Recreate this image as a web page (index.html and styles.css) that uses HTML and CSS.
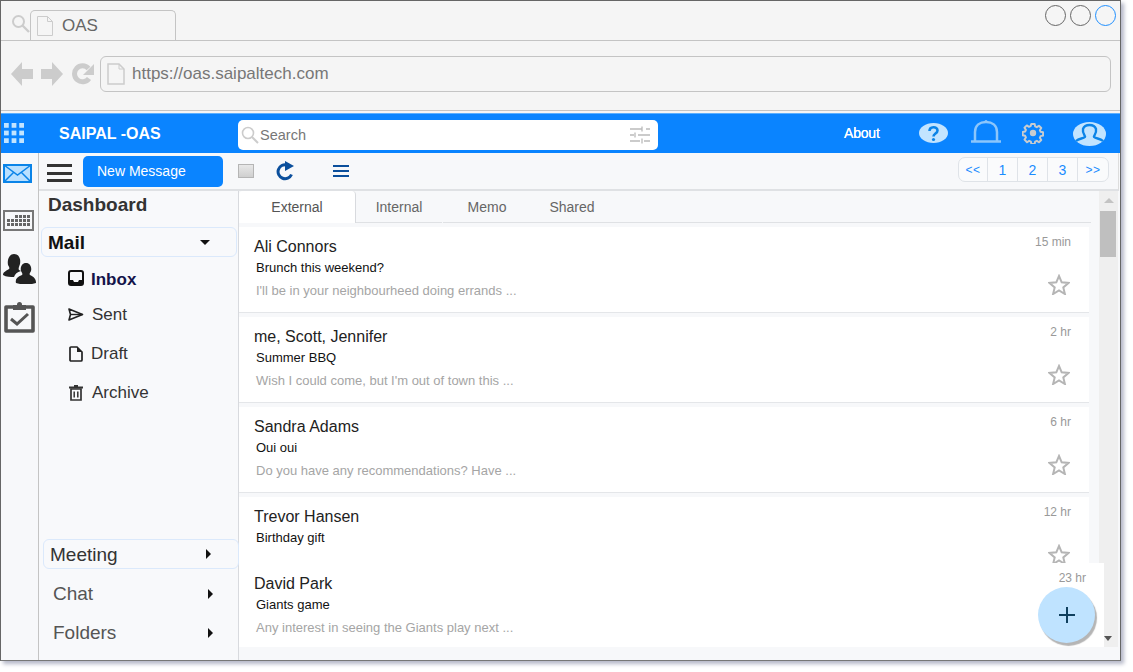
FILE: index.html
```html
<!DOCTYPE html>
<html lang="en">
<head>
<meta charset="utf-8">
<title>OAS</title>
<link rel="stylesheet" href="styles.css">
</head>
<body>
<div class="window">
  <div class="tabrow">
    <svg class="ic-search" width="20" height="20" viewBox="0 0 20 20"><circle cx="7.5" cy="7.5" r="5.5" fill="none" stroke="#ccc" stroke-width="2"/><path d="M11.5 11.5L18 18" stroke="#ccc" stroke-width="2.4"/></svg>
    <div class="tab">
      <svg width="16" height="20" viewBox="0 0 16 20"><path d="M.5.5h10l5 5v14H.5z" fill="#f5f5f5" stroke="#ccc"/><path d="M10.500.5v5h5" fill="none" stroke="#ccc"/></svg>
      <span>OAS</span>
    </div>
    <div class="winbtns"><i class="wb"></i><i class="wb"></i><i class="wb blue"></i></div>
  </div>
  <div class="addrrow">
    <svg class="nav-arrow" width="22" height="24" viewBox="0 0 22 24"><path d="M0 12L11 0v7h11v10H11v7z" fill="#ccc"/></svg>
    <svg class="nav-arrow" width="22" height="24" viewBox="0 0 22 24"><path d="M22 12L11 0v7H0v10h11v7z" fill="#ccc"/></svg>
    <svg class="nav-reload" width="22" height="22" viewBox="0 0 22 22"><path d="M17 15.500A8 8 0 1 1 16.500 5.500" fill="none" stroke="#ccc" stroke-width="5"/><path d="M22 1v11H11z" fill="#ccc"/></svg>
    <div class="addr">
      <svg width="18" height="22" viewBox="0 0 18 22"><path d="M1 1h11l5 5v15H1z" fill="#f5f5f5" stroke="#ccc" stroke-width="1.500"/><path d="M12 1v5h5" fill="none" stroke="#ccc"/></svg>
      <span>https://oas.saipaltech.com</span>
    </div>
  </div>
  <header class="appbar">
    <svg class="grid" width="20" height="20" viewBox="0 0 21 21" fill="#c2e4ff"><rect width="5" height="5"/><rect x="8" width="5" height="5"/><rect x="16" width="5" height="5"/><rect y="8" width="5" height="5"/><rect x="8" y="8" width="5" height="5"/><rect x="16" y="8" width="5" height="5"/><rect y="16" width="5" height="5"/><rect x="8" y="16" width="5" height="5"/><rect x="16" y="16" width="5" height="5"/></svg>
    <div class="brand">SAIPAL -OAS</div>
    <div class="search">
      <svg width="18" height="18" viewBox="0 0 18 18"><circle cx="7" cy="7" r="5.500" fill="none" stroke="#ccc" stroke-width="1.600"/><path d="M11 11l6 6" stroke="#ccc" stroke-width="2"/></svg>
      <span class="search-label">Search</span>
      <svg class="sliders" width="20" height="18" viewBox="0 0 20 18" stroke="#bbb" stroke-width="1.300" fill="none"><path d="M0 3h12M16 3h4M12 .5v5M0 9h4M8 9h12M5 6.500v5M0 15h10M14 15h6M12 12.500v5"/></svg>
    </div>
    <div class="about">About</div>
    <svg class="a-help" width="29" height="20" viewBox="0 0 29 20"><ellipse cx="14.500" cy="10" rx="14.500" ry="10" fill="#c2e4ff"/><path d="M10.500 8c0-5 8-5 8-.5 0 3-4 3-4 6" fill="none" stroke="#0a84e8" stroke-width="2.600"/><circle cx="14.500" cy="16.500" r="1.600" fill="#0a84e8"/></svg>
    <svg class="a-bell" width="30" height="24" viewBox="0 0 30 24"><path d="M4 21V12C4 5 9 2 15 2s11 3 11 10v9" fill="none" stroke="#8cc6fb" stroke-width="2.500"/><path d="M0 21.500h30" stroke="#8cc6fb" stroke-width="2.500"/><circle cx="15" cy="1.500" r="1.500" fill="#8cc6fb"/></svg>
    <svg class="a-gear" width="22" height="22" viewBox="0 0 24 24"><path d="M10 1h4l.6 3 2 .9 2.600-1.700 2.800 2.800-1.700 2.600.9 2 3 .6v4l-3 .6-.9 2 1.700 2.600-2.800 2.800-2.600-1.700-2 .9-.6 3h-4l-.6-3-2-.9-2.600 1.700L1.700 20l1.700-2.600-.9-2-3-.6v-4l3-.6.9-2L1.700 5.600l2.800-2.800L7.100 4.500l2-.9z" fill="none" stroke="#c8ccd0" stroke-width="2.400" stroke-linejoin="round" transform="translate(1.200 1.200) scale(.9)"/><circle cx="12" cy="12" r="3.500" fill="#c8ccd0"/></svg>
    <svg class="a-user" width="33" height="24" viewBox="0 0 33 24"><ellipse cx="16.500" cy="12" rx="16.500" ry="12" fill="#c2e4ff"/><path d="M3 19c3-3 7-2 9-4 1-1-3-3-2-8 1-3 4-4 6.500-4s5.500 1 6.500 4c1 5-3 7-2 8 2 2 6 1 9 4" fill="none" stroke="#0a84e8" stroke-width="2.400"/></svg>
  </header>
  <div class="body">
    <nav class="rail">
      <svg class="r-mail" width="29" height="19" viewBox="0 0 29 19"><rect x="1" y="1" width="27" height="17" fill="#b9e0ff" stroke="#0a84e8" stroke-width="2"/><path d="M1 1l13.500 10L28 1M1 18l10-10M28 18L18 8" fill="none" stroke="#0a84e8" stroke-width="1.500"/></svg>
      <svg class="r-cal" width="31" height="21" viewBox="0 0 31 21"><rect x="1" y="1" width="29" height="19" fill="#f7f8fa" stroke="#777" stroke-width="2"/><path d="M12 5h3v3h-3zM16 5h3v3h-3zM20 5h3v3h-3zM24 5h3v3h-3zM4 9h3v3H4zM8 9h3v3H8zM12 9h3v3h-3zM16 9h3v3h-3zM20 9h3v3h-3zM24 9h3v3h-3zM4 13h3v3H4zM8 13h3v3H8zM12 13h3v3h-3zM16 13h3v3h-3zM20 13h3v3h-3zM24 13h3v3h-3z" fill="#666"/></svg>
      <svg class="r-people" width="33" height="31" viewBox="0 0 33 31" fill="#222"><path d="M0 22c0-3 3-4 6-6 1-1 0-2-1-4-1-5 1-11 6-11s7 5 6 10c-1 3-2 5-1 6l2 1c-4 1-6 3-7 6-3 0-8 0-11-2z"/><path d="M13 30c-1-4 1-6 6-8 1-1 0-2-1-4-1-4 1-8 5-8s6 4 5 8c-1 2-2 3-1 4 4 2 6 4 6 8-6 2-14 2-20 0z"/></svg>
      <svg class="r-clip" width="31" height="31" viewBox="0 0 31 31"><path d="M9 5H2v24h27V5h-7" fill="none" stroke="#555" stroke-width="3.600" stroke-linejoin="round"/><rect x="9" y="3" width="13" height="5" fill="#555"/><circle cx="15.500" cy="2.500" r="2.500" fill="#555"/><path d="M7 17l6 5 11-10" fill="none" stroke="#555" stroke-width="3"/></svg>
    </nav>
    <div class="content">
      <div class="toolbar">
        <button class="burger" type="button"><i></i><i></i><i></i></button>
        <div class="newmsg">New Message</div>
        <div class="check"></div>
        <svg class="t-refresh" width="20" height="20" viewBox="0 0 20 20"><path d="M15.500 13.500A7 7 0 1 1 11 4" fill="none" stroke="#0b4f9c" stroke-width="3"/><path d="M9 0l9 5-9 5z" fill="#0b4f9c"/></svg>
        <div class="t-menu"><i></i><i></i><i></i></div>
        <div class="pager"><span>&lt;&lt;</span><span>1</span><span>2</span><span>3</span><span>&gt;&gt;</span></div>
      </div>
      <div class="split">
        <aside class="side">
          <div class="dash">Dashboard</div>
          <div class="mail-h"><span>Mail</span><i class="caret-d"></i></div>
          <ul class="folders">
            <li class="f-inbox"><svg width="16" height="16" viewBox="0 0 16 16"><rect x="1" y="1" width="14" height="14" rx="2" fill="none" stroke="#111" stroke-width="2"/><path d="M1 10h4l1 2h4l1-2h4v5H1z" fill="#111"/></svg><span>Inbox</span></li>
            <li class="f-sent"><svg width="16" height="13" viewBox="0 0 16 13"><path d="M1 1l13.500 5.500L1 12l1.500-5.500z" fill="none" stroke="#222" stroke-width="1.600" stroke-linejoin="round"/><path d="M2.500 6.500h12" stroke="#222" stroke-width="1.400"/></svg><span>Sent</span></li>
            <li class="f-draft"><svg width="14" height="16" viewBox="0 0 14 16"><path d="M1 2a1 1 0 0 1 1-1h6l5 5v8a1 1 0 0 1-1 1H2a1 1 0 0 1-1-1z" fill="none" stroke="#222" stroke-width="1.700"/><path d="M8 1v5h5" fill="#222"/></svg><span>Draft</span></li>
            <li class="f-arch"><svg width="14" height="16" viewBox="0 0 14 16"><path d="M2 4h10v11H2z" fill="none" stroke="#333" stroke-width="1.700"/><path d="M0 2.500h14" stroke="#333" stroke-width="2"/><path d="M5 1h4" stroke="#333" stroke-width="2"/><path d="M5.200 6.500v6M8.800 6.500v6" stroke="#333" stroke-width="1.500"/></svg><span>Archive</span></li>
          </ul>
          <div class="side-bottom">
            <div class="s-item s-meet"><span>Meeting</span><i class="caret-r"></i></div>
            <div class="s-item s-plain"><span>Chat</span><i class="caret-r"></i></div>
            <div class="s-item s-plain"><span>Folders</span><i class="caret-r"></i></div>
          </div>
        </aside>
        <main class="main">
          <div class="tabs"><div class="mt active">External</div><div class="mt">Internal</div><div class="mt">Memo</div><div class="mt">Shared</div></div>
          <div class="listwrap">
            <div class="list">
              <article class="card"><div class="name">Ali Connors</div><time>15 min</time><div class="subj">Brunch this weekend?</div><div class="prev">I'll be in your neighbourheed doing errands ...</div><svg class="star" width="22" height="21" viewBox="0 0 22 21"><path d="M11 2l2.700 6.300 6.800.6-5.200 4.500 1.600 6.600L11 16.500 5.100 20l1.600-6.600L1.500 8.900l6.800-.6z" fill="none" stroke="#b5b5b5" stroke-width="2"/></svg></article>
              <article class="card"><div class="name">me, Scott, Jennifer</div><time>2 hr</time><div class="subj">Summer BBQ</div><div class="prev">Wish I could come, but I'm out of town this ...</div><svg class="star" width="22" height="21" viewBox="0 0 22 21"><path d="M11 2l2.700 6.300 6.800.6-5.200 4.500 1.600 6.600L11 16.500 5.100 20l1.600-6.600L1.500 8.900l6.800-.6z" fill="none" stroke="#b5b5b5" stroke-width="2"/></svg></article>
              <article class="card"><div class="name">Sandra Adams</div><time>6 hr</time><div class="subj">Oui oui</div><div class="prev">Do you have any recommendations? Have ...</div><svg class="star" width="22" height="21" viewBox="0 0 22 21"><path d="M11 2l2.700 6.300 6.800.6-5.200 4.500 1.600 6.600L11 16.500 5.100 20l1.600-6.600L1.500 8.900l6.800-.6z" fill="none" stroke="#b5b5b5" stroke-width="2"/></svg></article>
              <article class="card"><div class="name">Trevor Hansen</div><time>12 hr</time><div class="subj">Birthday gift</div><svg class="star" width="22" height="21" viewBox="0 0 22 21"><path d="M11 2l2.700 6.300 6.800.6-5.200 4.500 1.600 6.600L11 16.500 5.100 20l1.600-6.600L1.500 8.900l6.800-.6z" fill="none" stroke="#b5b5b5" stroke-width="2"/></svg></article>
            </div>
            <div class="scrollbar"><i class="sb-up"></i><i class="sb-thumb"></i><i class="sb-down"></i></div>
            <article class="card overlay"><div class="name">David Park</div><time>23 hr</time><div class="subj">Giants game</div><div class="prev">Any interest in seeing the Giants play next ...</div></article>
            <div class="fab"><svg width="18" height="18" viewBox="0 0 18 18"><path d="M9 1v16M1 9h16" stroke="#10405f" stroke-width="2"/></svg></div>
          </div>
        </main>
      </div>
    </div>
  </div>
</div>
</body>
</html>
```
FILE: styles.css
```css
* { box-sizing: border-box; }
html, body { margin: 0; padding: 0; background: #fff; }
body { font-family: "Liberation Sans", Arial, sans-serif; width: 1133px; height: 672px; overflow: hidden; }
ul { list-style: none; margin: 0; padding: 0; }
i { display: block; }

.window {
  width: 1121px; height: 661px;
  border: 1px solid #666; border-bottom-color: #777;
  box-shadow: 3px 3px 4px #b5b8c8;
  background: #f5f5f5;
  display: flex; flex-direction: column;
  position: relative; overflow: hidden;
}

.tabrow { height: 40px; flex: none; border-bottom: 1px solid #c4c4c4; display: flex; align-items: flex-start; position: relative; }
.ic-search { margin: 13px 0 0 10px; flex: none; }
.tab {
  width: 146px; height: 30px; margin: 9px 0 0 -1px;
  border: 1px solid #c4c4c4; border-bottom: 0; border-radius: 5px 5px 0 0;
  background: #f5f5f5; display: flex; align-items: center;
  padding-left: 6px; gap: 9px; color: #666; font-size: 17px;
  margin-bottom: -1px;
}
.winbtns { margin-left: auto; margin-top: 4px; margin-right: 4px; display: flex; gap: 4px; }
.wb { width: 21px; height: 21px; border: 1px solid #666; border-radius: 50%; }
.wb.blue { border-color: #1f8fff; }

.addrrow { height: 70px; flex: none; border-bottom: 1px solid #c4c4c4; display: flex; align-items: center; padding: 0 9px 3px 10px; }
.nav-arrow { flex: none; margin-right: 8px; }
.nav-reload { flex: none; margin: 0 6px 0 1px; }
.addr {
  flex: 1; height: 36px; border: 1px solid #c4c4c4; border-radius: 6px;
  display: flex; align-items: center; padding-left: 6px; gap: 7px;
  color: #777; font-size: 17px;
}

.appbar {
  height: 40px; flex: none; margin-top: 2px;
  background: #0a84ff; border-top: 1px solid #5cb0ff;
  display: flex; align-items: center; color: #fff; position: relative;
}
.grid { margin-left: 3px; margin-top: -1px; flex: none; }
.brand { margin-left: 35px; width: 179px; font-weight: 700; font-size: 16px; }
.search {
  width: 420px; height: 30px; margin-top: 3px; background: #fff; border-radius: 5px;
  display: flex; align-items: center; padding: 0 8px 0 3px; color: #777; font-size: 14.500px;
}
.search-label { margin-left: 1px; }
.sliders { margin-left: auto; }
.about { margin-left: 186px; font-size: 14px; font-weight: 400; width: 75px; letter-spacing: -.2px; text-shadow: 0 0 .4px #fff; margin-top: -1px; }
.a-help { flex: none; margin-top: -1px; }
.a-bell { flex: none; margin: -3px 0 0 23px; }
.a-gear { flex: none; margin: -1px 0 0 21px; }
.a-user { flex: none; margin: 0 0 0 29px; }

.body { flex: 1; display: flex; min-height: 0; }
.rail { width: 38px; flex: none; border-right: 1px solid #c4c4c4; background: #f7f8fa; display: flex; flex-direction: column; align-items: flex-start; padding-left: 2px; }
.rail svg { flex: none; }
.r-mail { margin-top: 11px; }
.r-cal { margin-top: 27px; }
.r-people { margin-top: 22px; }
.r-clip { margin-top: 18px; margin-left: 1px; }

.content { flex: 1; display: flex; flex-direction: column; min-width: 0; background: #f7f8fa; }
.toolbar { height: 38px; flex: none; border-bottom: 2px solid #dfe1e4; border-right: 1px solid #ddd; margin-right: 1px; display: flex; align-items: center; position: relative; }
.burger { width: 25px; height: 18px; margin-left: 8px; padding: 0; border: 0; background: none; display: flex; flex-direction: column; justify-content: space-between; flex: none; margin-top: 4px; }
.burger i { height: 3px; width: 100%; background: #333; }
.newmsg { width: 140px; height: 31px; margin-left: 11px; background: #0a84ff; border-radius: 5px; color: #fff; font-size: 14px; line-height: 31px; padding-left: 14px; flex: none; }
.check { width: 16px; height: 14px; margin-left: 15px; border: 1px solid #b5b5b5; background: linear-gradient(#e8e8e8, #cfcfcf); flex: none; }
.t-refresh { margin-left: 22px; flex: none; }
.t-menu { margin-left: 37px; width: 16px; height: 12px; display: flex; flex-direction: column; justify-content: space-between; flex: none; }
.t-menu i { height: 2px; background: #0b4f9c; }
.pager { margin-left: auto; margin-right: 9px; margin-top: -3px; height: 25px; display: flex; border: 1px solid #dfe3e8; border-radius: 7px; color: #1a8cff; font-size: 14px; background: #fafbfc; }
.pager span { width: 30px; text-align: center; line-height: 24px; border-right: 1px solid #dfe3e8; }
.pager span:first-child { width: 29px; }
.pager span:last-child { border-right: 0; }
.pager span:first-child, .pager span:last-child { font-size: 12px; letter-spacing: .5px; }

.split { flex: 1; display: flex; min-height: 0; }
.side { width: 200px; flex: none; border-right: 1px solid #d8dade; display: flex; flex-direction: column; background: #f8f9fb; }
.dash { font-size: 19px; font-weight: 700; color: #333; padding: 2px 0 0 9px; height: 36px; line-height: 23px; }
.mail-h {
  margin-left: 2px; height: 30px; width: 196px; border: 1px solid #dbe9fb; border-radius: 6px;
  display: flex; align-items: center; padding: 1px 0 0 6px; font-size: 19px; font-weight: 700; color: #111;
}
.caret-d { width: 0; height: 0; border: 5px solid transparent; border-top: 5px solid #111; border-bottom: 0; margin: -1px 26px 0 auto; }
.caret-r { width: 0; height: 0; border: 5px solid transparent; border-left: 5px solid #111; border-right: 0; margin-left: auto; }
.folders { padding: 5px 0 0 29px; font-size: 17px; color: #333; }
.folders li { height: 39px; display: flex; align-items: center; gap: 7px; }
.f-inbox { height: 35px !important; font-weight: 700; color: #14144a; }
.f-inbox svg { margin-top: -4px; }
.f-sent { height: 35px !important; gap: 8px !important; }
.f-draft { padding-top: 4px; padding-left: 1px; gap: 8px !important; }
.f-arch { padding-top: 4px; padding-left: 1px; gap: 9px !important; }
.side-bottom { margin-top: auto; padding-bottom: 8px; }
.s-item { display: flex; align-items: center; font-size: 19px; height: 39px; padding-right: 25px; }
.s-meet { height: 30px; margin: 0 -1px 5px 4px; width: 196px; border: 1px solid #dbe9fb; border-radius: 6px; padding: 1px 27px 0 6px; color: #333; }
.s-meet .caret-r { margin-top: -1px; }
.s-plain { padding-left: 14px; color: #555; }

.main { flex: 1; min-width: 0; display: flex; flex-direction: column; }
.tabs { height: 32px; flex: none; display: flex; font-size: 14px; color: #666; margin-right: 1px; }
.mt { height: 32px; line-height: 33px; text-align: center; }
.mt:nth-child(1) { width: 117px; background: #fff; border-right: 1px solid #d8dade; border-radius: 4px 4px 0 0; color: #555; }
.mt:nth-child(2) { width: 86px; border-bottom: 1px solid #dfe1e4; }
.mt:nth-child(3) { width: 88px; margin-left: 1px; border-bottom: 1px solid #dfe1e4; }
.mt:nth-child(4) { width: 88px; margin-left: -3px; border-bottom: 1px solid #dfe1e4; }
.tabs::after { content: ""; flex: none; width: 475px; border-bottom: 1px solid #dfe1e4; }

.listwrap { flex: 1; min-height: 0; display: flex; position: relative; }
.list { width: 850px; padding-top: 4px; display: flex; flex-direction: column; gap: 4px; overflow: hidden; flex: none; }
.card { height: 86px; flex: none; background: #fff; border-bottom: 1px solid #e4e6e9; position: relative; padding: 10px 0 0 15px; box-shadow: 1px 0 0 #eceef0; }
.name { font-size: 16px; line-height: 19px; color: #222; }
.subj { font-size: 13px; line-height: 14px; margin: 5px 0 0 2px; color: #111; }
.prev { font-size: 13px; line-height: 14px; margin: 9px 0 0 2px; color: #a5a5a5; }
.card time { position: absolute; top: 8px; right: 18px; font-size: 12px; color: #999; }
.star { position: absolute; right: 19px; top: 47px; }
.scrollbar { position: absolute; top: -32px; bottom: 13px; left: 860px; width: 19px; background: #efefef; }
.sb-up { position: absolute; top: 7px; left: 5px; width: 0; height: 0; border: 5px solid transparent; border-bottom: 5px solid #c3c3c3; border-top: 0; }
.sb-thumb { position: absolute; top: 20px; left: 1px; width: 16px; height: 46px; background: #bfbfbf; }
.sb-down { position: absolute; bottom: 6px; left: 5px; width: 0; height: 0; border: 4px solid transparent; border-top: 5px solid #555; border-bottom: 0; }
.overlay { position: absolute; left: 0; top: 340px; width: 865px; height: 84px; border-bottom: 0; box-shadow: none; padding-top: 11px; }
.overlay time { right: 18px; }
.fab { position: absolute; left: 799px; top: 364px; width: 57px; height: 56px; border-radius: 50%; background: #bfe3ff; box-shadow: 2px 3px 1px #b5b5b5; display: flex; align-items: center; justify-content: center; }
```
